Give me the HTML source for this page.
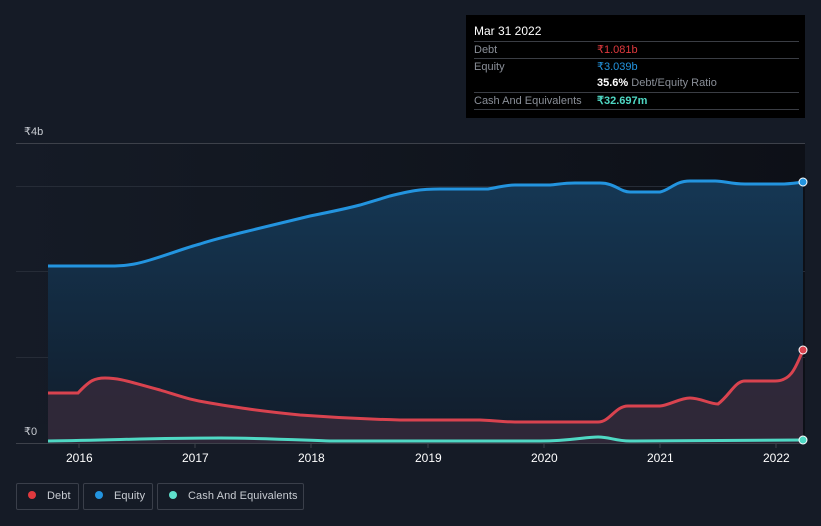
<!DOCTYPE html>
<html><head><meta charset="utf-8"><style>
html,body{margin:0;width:821px;height:526px;overflow:hidden}
body{background:#151b26;font-family:"Liberation Sans",sans-serif;position:relative}
.tt{position:absolute;left:466px;top:15px;width:339px;height:103px;background:#000;color:#fff;font-size:11px}
.row{position:absolute;left:8px;right:6px;border-top:1px solid #3a3d44;height:17px;line-height:17px;color:#8a8f98}
.row span{position:absolute;left:123px}
.leg{position:absolute;top:483px;height:27px;border:1px solid #3a3f4a;border-radius:2px;color:#c8ccd2;font-size:11px;letter-spacing:0.1px;line-height:25px;box-sizing:border-box;white-space:nowrap;overflow:hidden}
.dot{display:inline-block;width:8px;height:8px;border-radius:50%;margin:0 11px 0 11px;vertical-align:0px}
.yr{position:absolute;top:451px;color:#fff;font-size:12px}
</style></head><body>
<svg width="821" height="526" style="position:absolute;left:0;top:0">
<defs><linearGradient id="bg" x1="0" y1="0" x2="1" y2="0"><stop offset="0" stop-color="#151b26"/><stop offset="1" stop-color="#0d1017"/></linearGradient>
<linearGradient id="eq" x1="0" y1="0" x2="0" y2="1"><stop offset="0" stop-color="#153754"/><stop offset="1" stop-color="#111c2a"/></linearGradient></defs>
<rect x="16" y="143" width="789" height="300" fill="url(#bg)"/>
<line x1="16" y1="143.5" x2="805" y2="143.5" stroke="#3d414a"/>
<line x1="16" y1="186.5" x2="805" y2="186.5" stroke="#262c37"/>
<line x1="16" y1="271.5" x2="805" y2="271.5" stroke="#262c37"/>
<line x1="16" y1="357.5" x2="805" y2="357.5" stroke="#262c37"/>
<path d="M48,266 L110,266 C130,266 140,263 150,260 C170,254 185,248 200,244 C215,239 225,237 240,233 L310,216 C330,212 345,209 360,205 L390,196 C410,191 420,189 440,189 L488,189 C500,187 505,185 515,185 L550,185 C560,184 565,183 575,183 L600,183 C615,183 620,192 630,192 L660,192 C670,190 675,181 690,181 L715,181 C725,181 730,184 745,184 L780,184 C790,184 795,183 803,182 L803,443 L48,443 Z" fill="url(#eq)"/>
<path d="M48,393 L78,393 C90,380 95,378 105,378 C120,378 130,382 160,390 C180,396 190,400 210,403 C240,408 260,411 300,415 C340,418 360,419 400,420 L480,420 C500,421 505,422 515,422 L598,422 C610,422 615,406 628,406 L660,406 C670,405 680,398 690,398 C700,398 710,404 718,404 C730,395 735,381 745,381 L775,381 C790,381 795,370 803,350 L803,443 L48,443 Z" fill="#33293a" opacity="0.9"/>
<path d="M48,266 L110,266 C130,266 140,263 150,260 C170,254 185,248 200,244 C215,239 225,237 240,233 L310,216 C330,212 345,209 360,205 L390,196 C410,191 420,189 440,189 L488,189 C500,187 505,185 515,185 L550,185 C560,184 565,183 575,183 L600,183 C615,183 620,192 630,192 L660,192 C670,190 675,181 690,181 L715,181 C725,181 730,184 745,184 L780,184 C790,184 795,183 803,182" fill="none" stroke="#2394df" stroke-width="3"/>
<path d="M48,393 L78,393 C90,380 95,378 105,378 C120,378 130,382 160,390 C180,396 190,400 210,403 C240,408 260,411 300,415 C340,418 360,419 400,420 L480,420 C500,421 505,422 515,422 L598,422 C610,422 615,406 628,406 L660,406 C670,405 680,398 690,398 C700,398 710,404 718,404 C730,395 735,381 745,381 L775,381 C790,381 795,370 803,350" fill="none" stroke="#d9434f" stroke-width="3"/>
<path d="M48,441 C120,440 150,438 220,438 C260,438 300,440 330,441 L540,441 C570,441 585,437 598,437 C610,437 615,441 630,441 L803,440" fill="none" stroke="#4fd8c4" stroke-width="3"/>
<line x1="16" y1="443.5" x2="805" y2="443.5" stroke="#3d414a"/>
<circle cx="803" cy="182" r="4" fill="#2394df" stroke="#fff" stroke-width="1"/>
<circle cx="803" cy="350" r="4" fill="#d9434f" stroke="#fff" stroke-width="1"/>
<circle cx="803" cy="440" r="4" fill="#4fd8c4" stroke="#fff" stroke-width="1"/>
<g stroke="#3d414a"><line x1="79" y1="443" x2="79" y2="448"/><line x1="195" y1="443" x2="195" y2="448"/><line x1="311" y1="443" x2="311" y2="448"/><line x1="428" y1="443" x2="428" y2="448"/><line x1="544" y1="443" x2="544" y2="448"/><line x1="660" y1="443" x2="660" y2="448"/><line x1="776" y1="443" x2="776" y2="448"/></g>
<rect x="16" y="424" width="32" height="16" fill="#151b26"/>
<text x="24" y="135" fill="#c8ccd2" font-size="11" font-family="Liberation Sans, sans-serif">₹4b</text>
<text x="24" y="435" fill="#c8ccd2" font-size="11" font-family="Liberation Sans, sans-serif">₹0</text>
</svg>
<div class="yr" style="left:66px">2016</div><div class="yr" style="left:182px">2017</div><div class="yr" style="left:298px">2018</div><div class="yr" style="left:415px">2019</div><div class="yr" style="left:531px">2020</div><div class="yr" style="left:647px">2021</div><div class="yr" style="left:763px">2022</div>
<div class="tt">
<div style="position:absolute;left:8px;top:9px;font-size:12px">Mar 31 2022</div>
<div class="row" style="top:26px">Debt<span style="color:#e0393e">₹1.081b</span></div>
<div class="row" style="top:43px">Equity<span style="color:#2394df">₹3.039b</span></div>
<div class="row" style="top:60px;border-top:none"><span style="color:#fff"><b>35.6%</b> <span style="position:static;color:#8a8f98">Debt/Equity Ratio</span></span></div>
<div class="row" style="top:77px">Cash And Equivalents<span style="color:#4fd8c4;font-weight:bold">₹32.697m</span></div>
<div style="position:absolute;left:8px;right:6px;top:94px;border-top:1px solid #3a3d44"></div>
</div>
<div class="leg" style="left:16px;width:63px"><span class="dot" style="background:#e0393e"></span>Debt</div>
<div class="leg" style="left:83px;width:70px"><span class="dot" style="background:#2394df"></span>Equity</div>
<div class="leg" style="left:157px;width:147px"><span class="dot" style="background:#5ee0cc"></span>Cash And Equivalents</div>
</body></html>
